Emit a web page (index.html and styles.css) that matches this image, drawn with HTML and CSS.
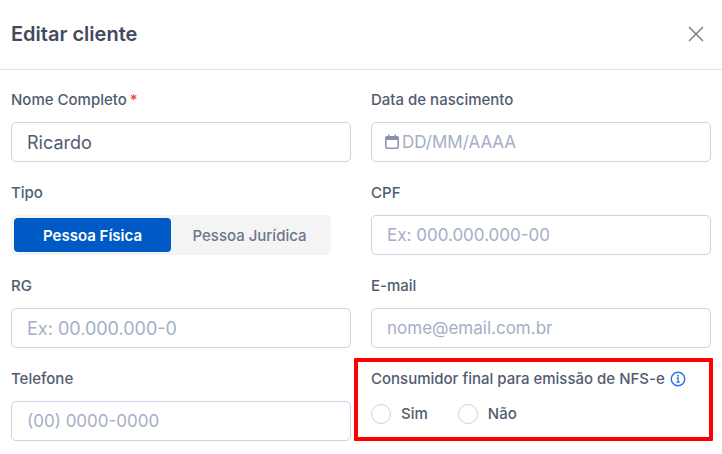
FILE: index.html
```
<!DOCTYPE html>
<html lang="pt-BR">
<head>
    <meta charset="UTF-8">
    <meta name="viewport" content="width=device-width, initial-scale=1.0">
    <title>Editar cliente</title>
    <link rel="stylesheet" href="styles.css">
</head>
<body>
    <header class="modal-header">
        <h1>Editar cliente</h1>
        <button type="button" class="close" aria-label="Fechar">
            <svg width="16" height="16" viewBox="0 0 16 16" fill="none" stroke="currentColor" stroke-width="1.5">
                <path d="M1 1l14 14M15 1L1 15"/>
            </svg>
        </button>
    </header>

    <form class="form-grid">
        <div class="field">
            <label for="nome">Nome Completo<span class="required">*</span></label>
            <input type="text" id="nome" class="control control-lg" value="Ricardo">
        </div>

        <div class="field">
            <label for="nascimento">Data de nascimento</label>
            <div class="control date-control">
                <svg width="14" height="16" viewBox="0 0 14 16">
                    <rect x="0.75" y="2.75" width="12.5" height="11.5" rx="1.5" fill="none" stroke="currentColor" stroke-width="1.5"/>
                    <path d="M0.5 3h13v3h-13zM3 0.5h1.5v2.5H3zM9.5 0.5H11v2.5H9.5z" fill="currentColor"/>
                </svg>
                <input type="text" id="nascimento" placeholder="DD/MM/AAAA">
            </div>
        </div>

        <div class="field">
            <span class="label" id="tipo-label">Tipo</span>
            <div class="toggle" role="group" aria-labelledby="tipo-label">
                <button type="button" class="active" aria-pressed="true">Pessoa Física</button>
                <button type="button" aria-pressed="false">Pessoa Jurídica</button>
            </div>
        </div>

        <div class="field">
            <label for="cpf">CPF</label>
            <input type="text" id="cpf" class="control" placeholder="Ex: 000.000.000-00">
        </div>

        <div class="field">
            <label for="rg">RG</label>
            <input type="text" id="rg" class="control control-lg" placeholder="Ex: 00.000.000-0">
        </div>

        <div class="field">
            <label for="email">E-mail</label>
            <input type="email" id="email" class="control" placeholder="nome@email.com.br">
        </div>

        <div class="field">
            <label for="telefone">Telefone</label>
            <input type="tel" id="telefone" class="control" placeholder="(00) 0000-0000">
        </div>

        <div class="field highlighted" role="radiogroup" aria-labelledby="consumidor-label">
            <div class="label">
                <span id="consumidor-label">Consumidor final para emissão de NFS-e</span>
                <svg class="info" width="16" height="16" viewBox="0 0 16 16" fill="none" stroke="currentColor">
                    <circle cx="8" cy="8" r="6.75" stroke-width="1.4"/>
                    <path d="M6.5 7.2H8.2V11M6.3 11.2h3.5" stroke-width="1.3"/>
                    <circle cx="8" cy="4.8" r="1" fill="currentColor" stroke="none"/>
                </svg>
            </div>
            <div class="radios">
                <label><input type="radio" name="consumidor" value="sim">Sim</label>
                <label><input type="radio" name="consumidor" value="nao">Não</label>
            </div>
        </div>
    </form>
</body>
</html>
```
FILE: styles.css
```
* {
    box-sizing: border-box;
}

body {
    margin: 0;
    background: #fff;
    color: #525c70;
    font-family: Inter, "Liberation Sans", sans-serif;
    font-size: 15px;
}

button, input {
    font-family: inherit;
}

.modal-header {
    display: flex;
    align-items: center;
    justify-content: space-between;
    height: 70px;
    padding: 0 11px 2px;
    border-bottom: 1px solid #e0e4ee;
}

h1 {
    margin: 0;
    color: #414a5e;
    font-size: 20px;
    font-weight: 600;
}

.close {
    display: flex;
    padding: 7px;
    border: 0;
    background: none;
    color: #808084;
}

.form-grid {
    display: grid;
    grid-template-columns: 1fr 1fr;
    gap: 20px;
    padding: 19px 11px;
}

.field {
    display: flex;
    flex-direction: column;
    gap: 11px;
    min-width: 0;
}

label, .label {
    display: flex;
    align-items: center;
    font-weight: 500;
    line-height: 22px;
}

.required {
    margin-left: 3px;
    color: #f04438;
}

.control {
    width: 100%;
    height: 40px;
    padding: 0 15px;
    border: 1px solid #ccd2e5;
    border-radius: 5px;
    background: #fff;
    color: #525c70;
    font-size: 17px;
}

.control-lg {
    font-size: 18px;
}

::placeholder {
    color: #a5aec6;
    opacity: 1;
}

.date-control {
    display: flex;
    align-items: center;
    gap: 3px;
    padding: 0 13px;
}

.date-control svg {
    flex: none;
    color: #8791a9;
}

.date-control input {
    flex: 1;
    min-width: 0;
    padding: 0;
    border: 0;
    outline: 0;
    color: inherit;
    font-size: 17px;
}

.toggle {
    display: grid;
    grid-template-columns: 1fr 1fr;
    width: 320px;
    max-width: 100%;
    height: 40px;
    padding: 3px;
    border-radius: 5px;
    background: #f4f4f5;
}

.toggle button {
    padding: 0;
    border: 0;
    border-radius: 4px;
    background: none;
    color: #6d768a;
    font-size: 15px;
    font-weight: 500;
}

.toggle .active {
    background: #005ac5;
    color: #fff;
    font-weight: 600;
}

.info {
    margin-left: 5px;
    color: #2970e3;
}

.radios {
    display: flex;
    gap: 30px;
    align-items: center;
    min-height: 26px;
}

.radios label {
    gap: 10px;
}

.radios input {
    appearance: none;
    width: 20px;
    height: 20px;
    margin: 0;
    border: 1px solid #ccd2e5;
    border-radius: 50%;
}

.highlighted {
    position: relative;
}

/* marker frame drawn over the form */
.highlighted::after {
    content: "";
    position: absolute;
    inset: -10px -2px 0 -17px;
    border: 4px solid #ff0000;
    border-radius: 1px;
    pointer-events: none;
}
```
